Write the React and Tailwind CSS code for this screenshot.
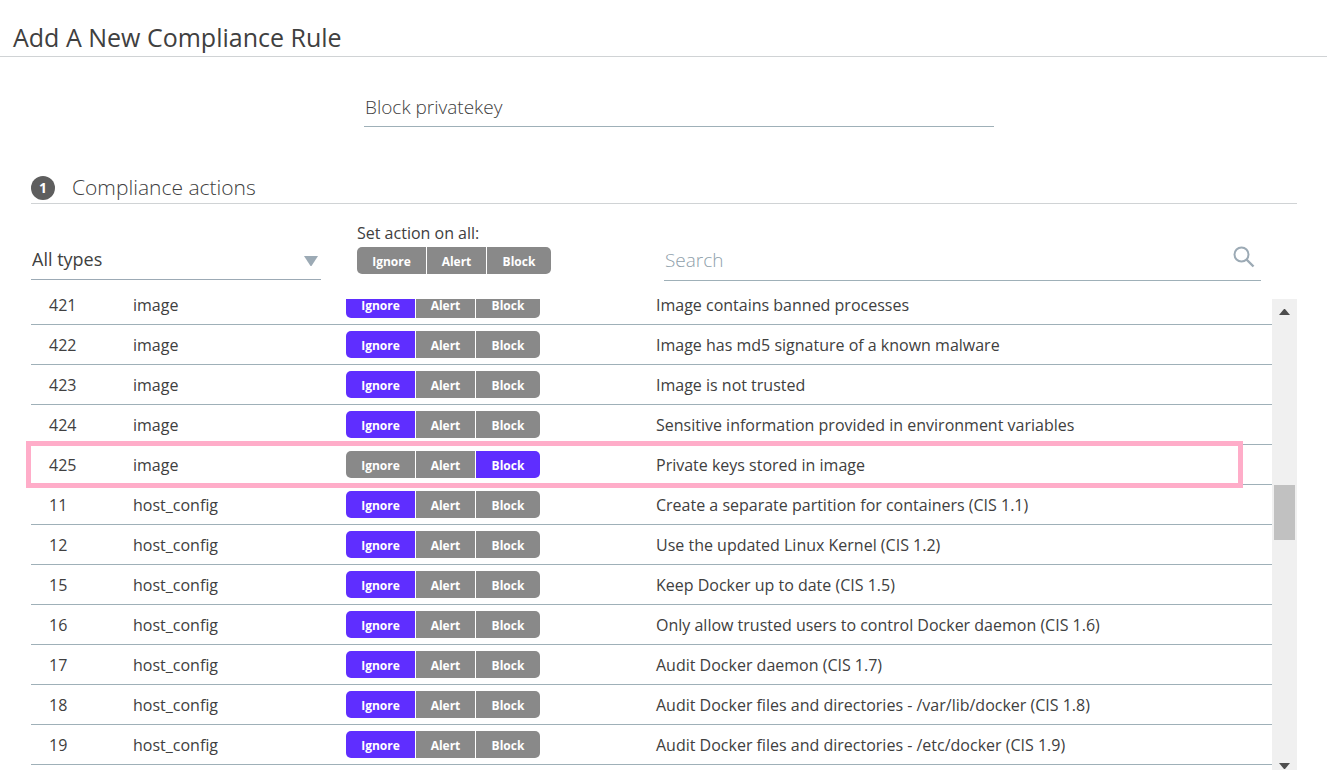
import { useState } from "react";

const RULES = [
  { id: "421", type: "image", action: "Ignore", text: "Image contains banned processes" },
  { id: "422", type: "image", action: "Ignore", text: "Image has md5 signature of a known malware" },
  { id: "423", type: "image", action: "Ignore", text: "Image is not trusted" },
  { id: "424", type: "image", action: "Ignore", text: "Sensitive information provided in environment variables" },
  { id: "425", type: "image", action: "Block", text: "Private keys stored in image", marked: true },
  { id: "11", type: "host_config", action: "Ignore", text: "Create a separate partition for containers (CIS 1.1)" },
  { id: "12", type: "host_config", action: "Ignore", text: "Use the updated Linux Kernel (CIS 1.2)" },
  { id: "15", type: "host_config", action: "Ignore", text: "Keep Docker up to date (CIS 1.5)" },
  { id: "16", type: "host_config", action: "Ignore", text: "Only allow trusted users to control Docker daemon (CIS 1.6)" },
  { id: "17", type: "host_config", action: "Ignore", text: "Audit Docker daemon (CIS 1.7)" },
  { id: "18", type: "host_config", action: "Ignore", text: "Audit Docker files and directories - /var/lib/docker (CIS 1.8)" },
  { id: "19", type: "host_config", action: "Ignore", text: "Audit Docker files and directories - /etc/docker (CIS 1.9)" },
];

const SEGMENTS = [
  { name: "Ignore", shape: "w-[69px] rounded-l-[5px]" },
  { name: "Alert", shape: "w-[59px]" },
  { name: "Block", shape: "w-16 rounded-r-[5px]" },
];

function ActionGroup({ value, onChange, label }) {
  return (
    <div role="group" aria-label={label} className="flex gap-px">
      {SEGMENTS.map(({ name, shape }) => (
        <button
          key={name}
          type="button"
          aria-pressed={value === name}
          onClick={() => onChange(name)}
          className={`h-[27px] pt-0.5 text-center text-[12px] leading-6 font-bold text-white ${shape} ${
            value === name ? "bg-[#5f2eff]" : "bg-[#898989]"
          }`}
        >
          {name}
        </button>
      ))}
    </div>
  );
}

function ScrollRail() {
  return (
    <div className="flex w-[25px] shrink-0 flex-col items-center justify-between bg-[#f0f0f0]">
      <button type="button" aria-label="Scroll up" className="flex h-[26px] w-full items-center justify-center">
        <svg width="11" height="6" viewBox="0 0 11 6" fill="#4d4d4d"><path d="M5 0h1l5 6H0z" /></svg>
      </button>
      <div className="flex w-full flex-1 flex-col items-center pt-40">
        <div className="h-[55px] w-[21px] bg-[#c1c1c1]" />
      </div>
      <button type="button" aria-label="Scroll down" className="flex h-[7px] w-full items-start justify-center">
        <svg width="11" height="6" viewBox="0 0 11 6" fill="#4d4d4d"><path d="M0 0h11L6 6H5z" /></svg>
      </button>
    </div>
  );
}

export default function App() {
  const [name, setName] = useState("Block privatekey");
  const [actions, setActions] = useState(RULES.map((r) => r.action));

  return (
    <main className="flex h-screen flex-col overflow-hidden bg-white font-['Open_Sans',sans-serif] text-[#404040]">
      <header className="border-b border-[#d0d3d5] px-[13px] pt-[19px] pb-px">
        <h1 className="text-[25px] leading-9 font-normal">Add A New Compliance Rule</h1>
      </header>

      <div className="flex pt-[31px] pr-[333px] pl-[364px]">
        <input
          aria-label="Rule name"
          value={name}
          onChange={(e) => setName(e.target.value)}
          className="h-[39px] min-w-0 flex-1 border-b border-[#9fb0b8] pl-px text-[19px] font-light outline-none"
        />
      </div>

      <section className="flex min-h-0 flex-1 flex-col pt-[45px] pr-[30px] pl-[31px]">
        <div className="flex h-8 items-center gap-[17px] border-b border-[#d0d3d5]">
          <span className="flex size-6 items-center justify-center rounded-full bg-[#5e5e5e] text-[14px] font-bold text-white">1</span>
          <h2 className="pb-0.5 text-[21px] leading-7 font-light">Compliance actions</h2>
        </div>

        <div className="flex items-start pt-[19px] pr-9">
          <div className="relative mt-[17px] w-[290px] shrink-0">
            <select aria-label="Rule type" className="h-10 w-full appearance-none border-b border-[#9caab5] bg-transparent pl-px text-[18px] outline-none">
              <option>All types</option>
              <option>image</option>
              <option>host_config</option>
            </select>
            <svg className="pointer-events-none absolute top-4 right-[3px]" width="14" height="10" viewBox="0 0 14 10" fill="#9caab5">
              <path d="M0 0h14L7.5 10h-1z" />
            </svg>
          </div>
          <div className="ml-9 w-[307px] shrink-0">
            <p className="pb-1 text-[16px] leading-5">Set action on all:</p>
            <ActionGroup label="Set action on all" value={null} onChange={(n) => setActions(RULES.map(() => n))} />
          </div>
          <div className="mt-[18px] flex h-10 flex-1 items-center border-b border-[#9fb0b8] pr-[6px]">
            <input
              type="search"
              aria-label="Search rules"
              placeholder="Search"
              className="min-w-0 flex-1 pl-px text-[19px] font-light outline-none placeholder:text-[#8f9fab]"
            />
            <svg className="mb-2" width="22" height="22" viewBox="0 0 22 22" fill="none" stroke="#9caab5" strokeWidth="2">
              <circle cx="8.5" cy="8.5" r="7" />
              <path d="M13.5 13.5l7 7" strokeWidth="2.4" />
            </svg>
          </div>
        </div>

        <div className="mt-[18px] -ml-[5px] flex min-h-0 flex-1">
          <div className="min-w-0 flex-1 overflow-hidden pl-[5px]">
            <table className="-mt-3.5 w-full table-fixed border-separate border-spacing-0 text-left text-[16px] leading-5">
              <colgroup>
                <col className="w-[102px]" />
                <col className="w-[213px]" />
                <col className="w-[310px]" />
                <col />
              </colgroup>
              <tbody>
                {RULES.map((rule, i) => (
                  <tr key={rule.id} className="relative h-10">
                    <td className="border-b border-[#9fb0b8] pl-[18px]">
                      {rule.id}
                      {rule.marked && (
                        <span className="pointer-events-none absolute -top-1 right-[29px] -bottom-[3px] -left-[5px] z-10 border-[5px] border-[#ffadc9]" />
                      )}
                    </td>
                    <td className="border-b border-[#9fb0b8]">{rule.type}</td>
                    <td className="border-b border-[#9fb0b8]">
                      <ActionGroup
                        label={`Action for rule ${rule.id}`}
                        value={actions[i]}
                        onChange={(n) => setActions(actions.map((a, j) => (j === i ? n : a)))}
                      />
                    </td>
                    <td className="border-b border-[#9fb0b8]">{rule.text}</td>
                  </tr>
                ))}
              </tbody>
            </table>
          </div>
          <ScrollRail />
        </div>
      </section>
    </main>
  );
}
